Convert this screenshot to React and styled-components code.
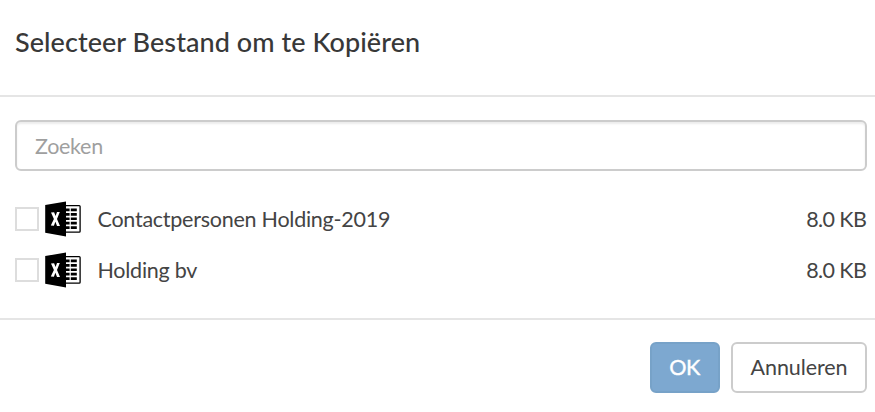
import React from "react";
import styled, { createGlobalStyle } from "styled-components";

const GlobalStyle = createGlobalStyle`
  * { box-sizing: border-box; }
  body { margin: 0; background: #fff; }
`;

const Dialog = styled.div`
  width: 875px;
  height: 412px;
  overflow: hidden;
  display: flex;
  flex-direction: column;
  background: #fff;
  color: #444;
  font-family: Lato, sans-serif;
  font-size: 21.5px;
  line-height: 30px;
`;

const Header = styled.header`
  height: 97px;
  padding: 23px 15px 0;
  border-bottom: 2px solid #e5e5e5;
`;

const Title = styled.h4`
  margin: 0;
  color: #383838;
  font-size: 27px;
  font-weight: 500;
  letter-spacing: 0.06px;
  line-height: 37px;
  white-space: nowrap;
`;

const Body = styled.main`
  height: 221px;
  padding: 23px 8px 0 15px;
`;

const SearchInput = styled.input`
  display: block;
  width: 100%;
  height: 51px;
  padding: 0 18px 0 18px;
  border: 2px solid #ccc;
  border-radius: 6px;
  outline: none;
  box-shadow: inset 0 2px 2px rgba(0, 0, 0, 0.075);
  font: inherit;
  letter-spacing: -0.3px;
  color: #555;
  &::placeholder { color: #9f9f9f; opacity: 1; }
`;

const FileList = styled.ul`
  margin: 22px 0 0;
  padding: 0;
  list-style: none;
`;

const FileRow = styled.li`
  display: flex;
  align-items: center;
  height: 51px;
`;

const Checkbox = styled.input`
  appearance: none;
  flex: none;
  width: 24px;
  height: 24px;
  margin: 0 6px 0 0;
  border: 2px solid #ddd;
  background: #fff;
`;

const IconSvg = styled.svg`
  flex: none;
  display: block;
  width: 36px;
  height: 36px;
  margin-right: 16.5px;
`;

const FileName = styled.span`
  flex: 1;
  letter-spacing: -0.25px;
`;

const FileSize = styled.span`
  margin-right: 0.8px;
  white-space: nowrap;
  letter-spacing: -0.6px;
`;

const Footer = styled.footer`
  display: flex;
  justify-content: flex-end;
  gap: 11px;
  height: 94px;
  padding: 22px 8px 0 0;
  border-top: 2px solid #e5e5e5;
`;

const Button = styled.button`
  width: ${(p) => (p.$primary ? 70 : 136)}px;
  height: 51px;
  padding: ${(p) => (p.$primary ? "0 1px 2px 0" : "0 0 2px")};
  border: 2px solid ${(p) => (p.$primary ? "#77a2c8" : "#ccc")};
  border-radius: 6px;
  background: ${(p) => (p.$primary ? "#7da8d0" : "#fff")};
  color: ${(p) => (p.$primary ? "#fff" : "#444")};
  font: inherit;
  letter-spacing: ${(p) => (p.$primary ? "-0.4px" : "-0.1px")};
  -webkit-text-stroke: ${(p) => (p.$primary ? "0.4px #fff" : "0")};
`;

const rows = [7.6, 12, 16.4, 20.8, 25.2];

function ExcelIcon() {
  return (
    <IconSvg viewBox="0 0 36 36" aria-hidden="true">
      <path d="M20 4.6H34.2Q35.1 4.6 35.1 5.5V30.2Q35.1 31.1 34.2 31.1H20" fill="#fff" stroke="#000" strokeWidth="1.3" />
      {rows.map((y) => (
        <path key={y} d={`M20 ${y}h4.6v2.7H20zM25.8 ${y}h6v2.7h-6z`} />
      ))}
      <path d="M0.2 4.1L21 0.4V35.4L0.2 31.8z" />
      <path d="M6 11.5L9.1 11.3L10.6 15L12 11.1L14.8 10.9L12 18L15 25.1L12 24.9L10.4 20.8L8.9 24.7L5.8 24.5L8.9 17.9z" fill="#fff" />
    </IconSvg>
  );
}

const files = [
  { name: "Contactpersonen Holding-2019", size: "8.0 KB" },
  { name: "Holding bv", size: "8.0 KB" },
];

export default function App() {
  return (
    <>
      <GlobalStyle />
      <Dialog role="dialog">
        <Header>
          <Title>Selecteer Bestand om te Kopiëren</Title>
        </Header>
        <Body>
          <SearchInput type="text" placeholder="Zoeken" />
          <FileList>
            {files.map((file) => (
              <FileRow key={file.name}>
                <Checkbox type="checkbox" aria-label={file.name} />
                <ExcelIcon />
                <FileName>{file.name}</FileName>
                <FileSize>{file.size}</FileSize>
              </FileRow>
            ))}
          </FileList>
        </Body>
        <Footer>
          <Button $primary>OK</Button>
          <Button>Annuleren</Button>
        </Footer>
      </Dialog>
    </>
  );
}
